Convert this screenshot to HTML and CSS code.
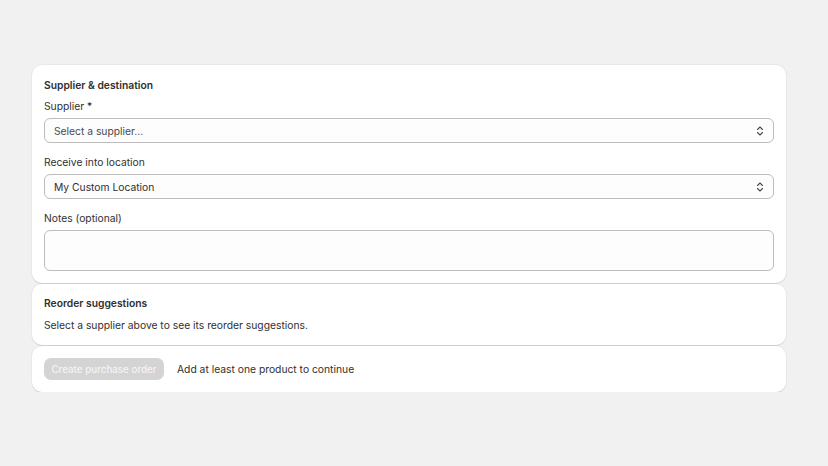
FILE: index.html
```html
<!DOCTYPE html>
<html lang="en">
<head>
    <meta charset="UTF-8">
    <meta name="viewport" content="width=device-width, initial-scale=1.0">
    <title>New purchase order</title>
    <link rel="stylesheet" href="styles.css">
</head>
<body>
    <main class="page">
        <section class="card">
            <h2 class="card-title">Supplier &amp; destination</h2>
            <div class="field">
                <label class="field-label" for="supplier">Supplier *</label>
                <div class="select">
                    <span class="select-value placeholder">Select a supplier...</span>
                    <svg class="select-icon" viewBox="0 0 8 12" width="8" height="12" aria-hidden="true">
                        <path d="M1.5 4.5 4 2l2.5 2.5M1.5 7.5 4 10l2.5-2.5" fill="none" stroke="#4a4a4a" stroke-width="1.1" stroke-linecap="round" stroke-linejoin="round"/>
                    </svg>
                </div>
            </div>
            <div class="field">
                <label class="field-label" for="location">Receive into location</label>
                <div class="select">
                    <span class="select-value">My Custom Location</span>
                    <svg class="select-icon" viewBox="0 0 8 12" width="8" height="12" aria-hidden="true">
                        <path d="M1.5 4.5 4 2l2.5 2.5M1.5 7.5 4 10l2.5-2.5" fill="none" stroke="#4a4a4a" stroke-width="1.1" stroke-linecap="round" stroke-linejoin="round"/>
                    </svg>
                </div>
            </div>
            <div class="field">
                <label class="field-label" for="notes">Notes (optional)</label>
                <textarea class="textarea" id="notes"></textarea>
            </div>
        </section>

        <section class="card card-info">
            <h2 class="card-title">Reorder suggestions</h2>
            <p class="card-text">Select a supplier above to see its reorder suggestions.</p>
        </section>

        <section class="card card-footer">
            <button class="btn" disabled>Create purchase order</button>
            <span class="card-text">Add at least one product to continue</span>
        </section>
    </main>
</body>
</html>
```

FILE: styles.css
```css
body {
    margin: 0;
    background-color: #f1f1f1;
    font-family: Inter, "Noto Sans", sans-serif;
    font-size: 10.3px;
    color: #303030;
}
.page {
    width: 754px;
    margin: 65px 0 0 32px;
    display: flex;
    flex-direction: column;
    gap: 1px;
}
.card {
    background: #fff;
    border-radius: 10px;
    padding: 12px;
    box-shadow: 0 1px 0 #d6d6d6, 0 0 0 1px rgba(0, 0, 0, 0.035);
}
.card-title {
    margin: 0 0 5px;
    font-size: 10.3px;
    font-weight: 600;
    line-height: 16px;
}
.field {
    display: flex;
    flex-direction: column;
    gap: 4px;
}
.field + .field {
    margin-top: 11px;
}
.field-label {
    line-height: 16px;
}
.select {
    height: 25px;
    box-sizing: border-box;
    border: 1px solid #bdbdbd;
    border-radius: 6px;
    background: #fdfdfd;
    display: flex;
    align-items: center;
    justify-content: space-between;
    padding: 0 9px;
}
.placeholder {
    color: #4a4a4a;
}
.textarea {
    height: 41px;
    box-sizing: border-box;
    border: 1px solid #bdbdbd;
    border-radius: 6px;
    background: #fdfdfd;
    resize: none;
    font: inherit;
    margin: 0;
}
.card-info {
    padding-top: 11px;
}
.card-info .card-title {
    margin-bottom: 6px;
}
.card-text {
    margin: 0;
    line-height: 16px;
}
.card-footer {
    display: flex;
    align-items: center;
    gap: 13px;
}
.btn {
    background-color: #d4d4d4;
    color: #f3f3f3;
    border: none;
    border-radius: 7px;
    height: 22px;
    width: 120px;
    padding: 0;
    font: inherit;
    font-size: 9.8px;
    font-weight: 500;
}
```
